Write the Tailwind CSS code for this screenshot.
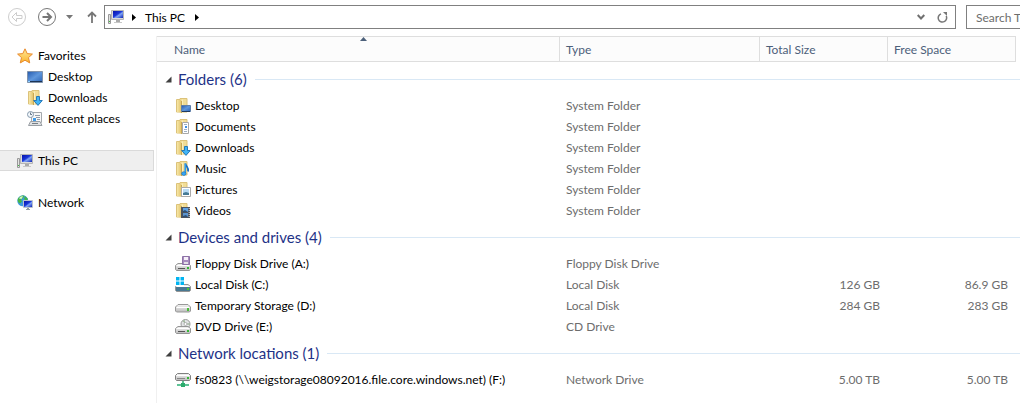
<!DOCTYPE html>
<html lang="en">
<head>
<meta charset="utf-8">
<title>This PC</title>
<script src="https://cdn.jsdelivr.net/npm/@tailwindcss/browser@4"></script>
</head>
<body class="bg-white text-black text-[12px] leading-[21px] font-['Segoe_UI','Lato',sans-serif] overflow-hidden">
<svg class="absolute size-0" aria-hidden="true">
  <defs>
    <linearGradient id="gold" x1="0" y1="0" x2="1" y2="0"><stop offset="0" stop-color="#f7e7a6"/><stop offset="1" stop-color="#e3c570"/></linearGradient>
    <linearGradient id="screen" x1="0" y1="0" x2="1" y2="1"><stop offset="0" stop-color="#0714a8"/><stop offset=".45" stop-color="#1a35d8"/><stop offset=".6" stop-color="#7fa4f4"/><stop offset="1" stop-color="#0c22b4"/></linearGradient>
    <linearGradient id="desk" x1="0" y1="0" x2="1" y2="1"><stop offset="0" stop-color="#2459ad"/><stop offset=".5" stop-color="#5f97dc"/><stop offset="1" stop-color="#2a62b4"/></linearGradient>
    <linearGradient id="metal" x1="0" y1="0" x2="0" y2="1"><stop offset="0" stop-color="#f4f4f4"/><stop offset="1" stop-color="#bcbcbc"/></linearGradient>
    <linearGradient id="starfill" x1="0" y1="0" x2="0" y2="1"><stop offset="0" stop-color="#ffe89a"/><stop offset="1" stop-color="#fbb52c"/></linearGradient>
    <symbol id="pc" viewBox="0 0 16 16">
      <path d="M.5 5.5h2v9h-2z" fill="#e2e2e2" stroke="#999"/><path d="M1 12h1v1H1z" fill="#3cc23c"/>
      <path d="M3.5 1.5h12v9h-12z" fill="#dcdcdc" stroke="#b5b5b5"/><path d="M5 2h10v7H5z" fill="url(#screen)"/>
      <path d="M8 11h4v2H8z" fill="#aaa"/><path d="M6 13h8v1H6z" fill="#c8c8c8"/>
    </symbol>
    <symbol id="star" viewBox="0 0 16 16"><path d="M8 .8l2.2 4.8 5.2.5-3.9 3.5 1.2 5.3L8 12.2l-4.7 2.7 1.2-5.3L.6 6.1l5.2-.5z" fill="url(#starfill)" stroke="#e88a2c" stroke-linejoin="round"/></symbol>
    <symbol id="desktop" viewBox="0 0 16 16"><path d="M.5 2.5h15v11H.5z" fill="url(#desk)" stroke="#7f92ab"/><path d="M1 12h14v1H1z" fill="#1c3455"/><path d="M1 12h2v1H1z" fill="#8fd0ff"/></symbol>
    <symbol id="folder" viewBox="0 0 16 16">
      <path d="M1.5 1.5h3.5v-1h7v13.500H1.500z" fill="#f2dd96" stroke="#dcc27a"/>
      <path d="M2 2h4v12.500l-4-.5z" fill="url(#gold)"/><path d="M6 3h1v12H6z" fill="#c9a954"/><path d="M7 2l1-1v13l-1 1z" fill="#faeebb"/>
    </symbol>
    <symbol id="downloads" viewBox="0 0 16 16"><use href="#folder"/><path d="M9.5 6.5h3v4h2.8L11 15.4l-4.3-4.9h2.8z" fill="#42b4f5" stroke="#1a70b4" stroke-width=".9"/></symbol>
    <symbol id="fdesktop" viewBox="0 0 16 16"><use href="#folder"/><path d="M6.5 7.5h9v6h-9z" fill="url(#desk)" stroke="#5f7ea8"/><path d="M7 13h8v1H7z" fill="#213b60"/></symbol>
    <symbol id="fdocs" viewBox="0 0 16 16"><use href="#folder"/><path d="M7.5 3.5h6v11h-6z" fill="#fff" stroke="#a8a8a8"/><path d="M9 5.5h3M9 10.5h3M9 12.5h3" stroke="#9fb0c2"/><path d="M10 7h2v2h-2z" fill="#3c8fe4"/></symbol>
    <symbol id="fmusic" viewBox="0 0 16 16"><use href="#folder"/><path d="M10.500 2.500c.2 3 3.500 4 2.600 8" fill="none" stroke="#1a6fc2" stroke-width="1.800"/><path d="M10.200 2.500v10" stroke="#2c9cec" stroke-width="1.600"/><ellipse cx="8.800" cy="12.600" rx="2.200" ry="1.900" fill="#32a5f5" stroke="#1767b0" stroke-width=".6"/></symbol>
    <symbol id="fpics" viewBox="0 0 16 16"><use href="#folder"/><path d="M6.500 5.500h9v9h-9z" fill="#fff" stroke="#aaa"/><path d="M8 7h6v6H8z" fill="#b9dcf6"/><path d="M8 11l3-1 3 1v2H8z" fill="#467b96"/></symbol>
    <symbol id="fvideo" viewBox="0 0 16 16"><use href="#folder"/><path d="M6 4h9v11H6z" fill="#4a535f"/><path d="M8 5h5v4H8z" fill="#5ea2e6"/><path d="M8 10h5v4H8z" fill="#5b94cf"/><path d="M8 8l2-1 3 2H8zM8 13l3-1 2 2H8z" fill="#2e4f74"/><path d="M14.200 5v10" stroke="#e8e8e8" stroke-dasharray="1 1"/></symbol>
    <symbol id="recent" viewBox="0 0 16 16">
      <path d="M4.5 1.5h10v10h-10z" fill="#f7f7f7" stroke="#a3a8ad"/><path d="M8 4.5h5M9 6.5h4" stroke="#8f9ba8"/><path d="M6 7h3v3H6z" fill="#3e9bea"/><path d="M10 8.5h3" stroke="#8f9ba8"/>
      <path d="M1.5 14.5l2-4h9.5l2 4z" fill="#dfe1e3" stroke="#9a9fa4"/><path d="M5 12.5h6" stroke="#777f87"/>
      <circle cx="3.5" cy="3.5" r="3" fill="#f2f7fb" stroke="#8498ab"/><path d="M3.5 1.5v2H5" fill="none" stroke="#44586e" stroke-width=".8"/>
    </symbol>
    <symbol id="network" viewBox="0 0 16 16">
      <circle cx="5.8" cy="5.8" r="5.5" fill="#3d9ade"/><path d="M1 3.5C3 .5 6 0 7.5.8L6 3 4 4.5l1 2-2 2C1 8 .2 5.5 1 3.5zM8 1l3 3-2 2-2-2z" fill="#46b548"/><path d="M2 3.500c1-2 2.500-2.500 4-2L4.500 4z" fill="#d1f3c5"/>
      <path d="M6.5 5.5h9v7h-9z" fill="#dcdcdc" stroke="#b9c1cc"/><path d="M7 6h8v6H7z" fill="url(#screen)"/><path d="M10 13h2v1h-2zM9 14h4v1H9z" fill="#929ba4"/>
    </symbol>
    <symbol id="drive" viewBox="0 0 16 16">
      <path d="M3 7.500h10l2.500 2v4l-1 1h-13l-1-1v-4z" fill="url(#metal)" stroke="#959595" stroke-linejoin="round"/><path d="M1.500 9.500h13" stroke="#fff"/>
    </symbol>
    <symbol id="floppy" viewBox="0 0 16 16"><use href="#drive"/><path d="M7.500.5h7v8h-7z" fill="#a88dbf" stroke="#8d72a6"/><path d="M9 1h4v3H9z" fill="#f7f0fa"/><path d="M9 6h4v2H9z" fill="#e4e0e8"/><path d="M3 12.500h7" stroke="#555"/><path d="M12 11h2v2h-2z" fill="#35b735"/></symbol>
    <symbol id="local" viewBox="0 0 16 16"><use href="#drive"/><path d="M1 10h14v4H1z" fill="#4a7891"/><path d="M12 11h2v2h-2z" fill="#50c52f"/><path d="M1 0h8v9H1z" fill="#fff"/><path d="M1 0h3.5v3.5H1zM5.500 0H9v3.500H5.500zM1 4.500h3.500V8H1zM5.500 4.500H9V8H5.500z" fill="#00b4f1"/></symbol>
    <symbol id="temp" viewBox="0 0 16 16"><path d="M3 6.500h10l2.500 2.500v4l-1 1h-13l-1-1V9z" fill="url(#metal)" stroke="#999" stroke-linejoin="round"/><path d="M1.500 9.500h13" stroke="#fff"/><path d="M12 10h2v3h-2z" fill="#48bd38"/></symbol>
    <symbol id="dvd" viewBox="0 0 16 16"><circle cx="10.500" cy="5" r="4.500" fill="#e2e4e5" stroke="#999"/><path d="M10.500 5L7.500 2l2-1.200zM10.500 5l4-1 .2 2z" fill="#9fb79a"/><use href="#drive"/><circle cx="10.500" cy="5" r="1.500" fill="#fff" stroke="#999" stroke-width=".7"/><path d="M3 12.500h7" stroke="#555"/><path d="M12 11h2v2h-2z" fill="#35b735"/></symbol>
    <symbol id="netdrive" viewBox="0 0 16 16"><path d="M2.500 1.500h11l2 2v4l-1 1h-13l-1-1v-4z" fill="url(#metal)" stroke="#808080" stroke-linejoin="round"/><path d="M1.500 3.500h13" stroke="#fff"/><path d="M2 6.500h8" stroke="#888"/><path d="M12 5h2v2h-2z" fill="#35b735"/><path d="M7 9h2v3H7zM2 12h12v2H2z" fill="#5fc396"/><path d="M6 11h4v4H6z" fill="#2cab6c"/></symbol>
    <symbol id="collapse" viewBox="0 0 7 7"><path d="M6.500 .5v6h-6z" fill="#404040"/></symbol>
  </defs>
</svg>

<header class="flex items-center h-[34px] pl-2">
  <button aria-label="Back" disabled class="shrink-0"><svg class="size-[18px]" viewBox="0 0 18 18" fill="none" stroke="#cdcdcd"><circle cx="9" cy="9" r="8.500"/><path d="M8.500 4.500L4 9l4.500 4.500V10.500H14v-3H8.500z"/></svg></button>
  <button aria-label="Forward" class="shrink-0 ml-3"><svg class="size-[18px]" viewBox="0 0 18 18" fill="none" stroke="#777"><circle cx="9" cy="9" r="8.500"/><path d="M4.500 9h8.500M9 5l4 4-4 4" stroke-width="2"/></svg></button>
  <button aria-label="Recent locations" class="shrink-0 ml-2.5"><svg class="w-[7px] h-1" viewBox="0 0 7 4"><path d="M0 0h7L3.500 4z" fill="#777"/></svg></button>
  <button aria-label="Up" class="shrink-0 ml-3.5"><svg class="w-[10px] h-3" viewBox="0 0 10 12" fill="none" stroke="#777" stroke-width="1.800"><path d="M5 12V1.500M1 5.500l4-4 4 4"/></svg></button>
  <div class="flex flex-1 min-w-0 items-center h-6 border border-[#808080] ml-[7px] pl-[3px] pr-[7px]">
    <svg class="size-4 shrink-0"><use href="#pc"/></svg>
    <svg class="w-1 h-[7px] ml-2 shrink-0" viewBox="0 0 4 7"><path d="M0 0v7l4-3.500z"/></svg>
    <button class="ml-[9px] whitespace-nowrap">This PC</button>
    <svg class="w-1 h-[7px] ml-2.5 shrink-0" viewBox="0 0 4 7"><path d="M0 0v7l4-3.500z"/></svg>
    <button aria-label="Previous locations" class="ml-auto"><svg class="w-2 h-[6px]" viewBox="0 0 8 6" fill="none" stroke="#707070" stroke-width="2"><path d="M.7 1L4 4.500 7.300 1"/></svg></button>
    <button aria-label="Refresh" class="ml-3"><svg class="size-[11px]" viewBox="0 0 11 11" fill="none" stroke="#777" stroke-width="1.500"><path d="M4 1.900A4.200 4.200 0 1 0 9.200 4"/><path d="M6 0h4v4z" fill="#777" stroke="none"/></svg></button>
  </div>
  <input type="text" role="searchbox" aria-label="Search This PC" placeholder="Search This PC" class="w-[54px] shrink-0 ml-2.5 h-6 border border-r-0 border-[#808080] pl-[9px] placeholder:text-[#6d6d6d] outline-none">
</header>

<div class="flex mt-0.5">
  <nav aria-label="Locations" class="w-[157px] shrink-0 border-r border-[#f0f0f0] pt-[9px] min-h-[367px]">
    <a href="#" class="flex items-center h-[21px] pl-[17px] gap-[5px]"><svg class="size-4"><use href="#star"/></svg>Favorites</a>
    <a href="#" class="flex items-center h-[21px] pl-[27px] gap-[5px]"><svg class="size-4"><use href="#desktop"/></svg>Desktop</a>
    <a href="#" class="flex items-center h-[21px] pl-[27px] gap-[5px]"><svg class="size-4"><use href="#downloads"/></svg>Downloads</a>
    <a href="#" class="flex items-center h-[21px] pl-[27px] gap-[5px]"><svg class="size-4"><use href="#recent"/></svg>Recent places</a>
    <a href="#" aria-current="page" class="flex items-center h-[21px] mt-[21px] mr-0.5 pl-[17px] gap-[5px] bg-[#efefef] border-y border-r border-[#dadada]"><svg class="size-4"><use href="#pc"/></svg>This PC</a>
    <a href="#" class="flex items-center h-[21px] mt-[21px] pl-[17px] gap-[5px]"><svg class="size-4"><use href="#network"/></svg>Network</a>
  </nav>
  <main class="flex-1 min-w-0">
    <table class="w-full table-fixed border-separate border-spacing-0 text-[#6d6d6d]">
      <colgroup><col><col class="w-[200px]"><col class="w-32"><col class="w-32"><col class="w-1"></colgroup>
      <thead>
        <tr class="h-[26px] text-left text-[#4c607a]">
          <th scope="col" aria-sort="ascending" class="relative font-normal bg-[#fcfcfc] border-y border-r border-[#dedede] p-0 pl-[17px]">Name<svg class="absolute top-0 left-1/2 ml-0.5 w-[7px] h-1" viewBox="0 0 7 4"><path d="M0 4h7L3.500 0z" fill="#4c607a"/></svg></th>
          <th scope="col" class="font-normal bg-[#fcfcfc] border-y border-r border-[#dedede] p-0 pl-1.5">Type</th>
          <th scope="col" class="font-normal bg-[#fcfcfc] border-y border-r border-[#dedede] p-0 pl-1.5">Total Size</th>
          <th scope="col" class="font-normal bg-[#fcfcfc] border-y border-r border-[#dedede] p-0 pl-1.5">Free Space</th>
          <td></td>
        </tr>
      </thead>
      <tbody>
        <tr class="h-[33px]"><th colspan="5" scope="rowgroup" class="p-0 font-normal"><button class="flex items-center w-full pl-2 pt-px text-[15px] text-[#1e3287]"><svg class="size-[7px] mr-1.5"><use href="#collapse"/></svg>Folders (6)<span class="flex-1 h-px ml-2 bg-[#d9e8f5]"></span></button></th></tr>
        <tr class="h-[21px]"><td class="p-0 pl-[18px]"><div class="flex items-center gap-1 text-black"><svg class="size-4"><use href="#fdesktop"/></svg>Desktop</div></td><td class="p-0 pl-1.5">System Folder</td></tr>
        <tr class="h-[21px]"><td class="p-0 pl-[18px]"><div class="flex items-center gap-1 text-black"><svg class="size-4"><use href="#fdocs"/></svg>Documents</div></td><td class="p-0 pl-1.5">System Folder</td></tr>
        <tr class="h-[21px]"><td class="p-0 pl-[18px]"><div class="flex items-center gap-1 text-black"><svg class="size-4"><use href="#downloads"/></svg>Downloads</div></td><td class="p-0 pl-1.5">System Folder</td></tr>
        <tr class="h-[21px]"><td class="p-0 pl-[18px]"><div class="flex items-center gap-1 text-black"><svg class="size-4"><use href="#fmusic"/></svg>Music</div></td><td class="p-0 pl-1.5">System Folder</td></tr>
        <tr class="h-[21px]"><td class="p-0 pl-[18px]"><div class="flex items-center gap-1 text-black"><svg class="size-4"><use href="#fpics"/></svg>Pictures</div></td><td class="p-0 pl-1.5">System Folder</td></tr>
        <tr class="h-[21px]"><td class="p-0 pl-[18px]"><div class="flex items-center gap-1 text-black"><svg class="size-4"><use href="#fvideo"/></svg>Videos</div></td><td class="p-0 pl-1.5">System Folder</td></tr>
      </tbody>
      <tbody>
        <tr class="h-8"><th colspan="5" scope="rowgroup" class="p-0 font-normal"><button class="flex items-center w-full pl-2 pt-px text-[15px] text-[#1e3287]"><svg class="size-[7px] mr-1.5"><use href="#collapse"/></svg>Devices and drives (4)<span class="flex-1 h-px ml-2 bg-[#d9e8f5]"></span></button></th></tr>
        <tr class="h-[21px]"><td class="p-0 pl-[18px]"><div class="flex items-center gap-1 text-black"><svg class="size-4"><use href="#floppy"/></svg>Floppy Disk Drive (A:)</div></td><td class="p-0 pl-1.5">Floppy Disk Drive</td></tr>
        <tr class="h-[21px]"><td class="p-0 pl-[18px]"><div class="flex items-center gap-1 text-black"><svg class="size-4"><use href="#local"/></svg>Local Disk (C:)</div></td><td class="p-0 pl-1.5">Local Disk</td><td class="p-0 pr-2 text-right">126 GB</td><td class="p-0 pr-2 text-right">86.9 GB</td></tr>
        <tr class="h-[21px]"><td class="p-0 pl-[18px]"><div class="flex items-center gap-1 text-black"><svg class="size-4"><use href="#temp"/></svg>Temporary Storage (D:)</div></td><td class="p-0 pl-1.5">Local Disk</td><td class="p-0 pr-2 text-right">284 GB</td><td class="p-0 pr-2 text-right">283 GB</td></tr>
        <tr class="h-[21px]"><td class="p-0 pl-[18px]"><div class="flex items-center gap-1 text-black"><svg class="size-4"><use href="#dvd"/></svg>DVD Drive (E:)</div></td><td class="p-0 pl-1.5">CD Drive</td></tr>
      </tbody>
      <tbody>
        <tr class="h-8"><th colspan="5" scope="rowgroup" class="p-0 font-normal"><button class="flex items-center w-full pl-2 pt-px text-[15px] text-[#1e3287]"><svg class="size-[7px] mr-1.5"><use href="#collapse"/></svg>Network locations (1)<span class="flex-1 h-px ml-2 bg-[#d9e8f5]"></span></button></th></tr>
        <tr class="h-[21px]"><td class="p-0 pl-[18px]"><div class="flex items-center gap-1 text-black whitespace-nowrap"><svg class="size-4"><use href="#netdrive"/></svg>fs0823 (\\weigstorage08092016.file.core.windows.net) (F:)</div></td><td class="p-0 pl-1.5">Network Drive</td><td class="p-0 pr-2 text-right">5.00 TB</td><td class="p-0 pr-2 text-right">5.00 TB</td></tr>
      </tbody>
    </table>
  </main>
</div>
</body>
</html>
